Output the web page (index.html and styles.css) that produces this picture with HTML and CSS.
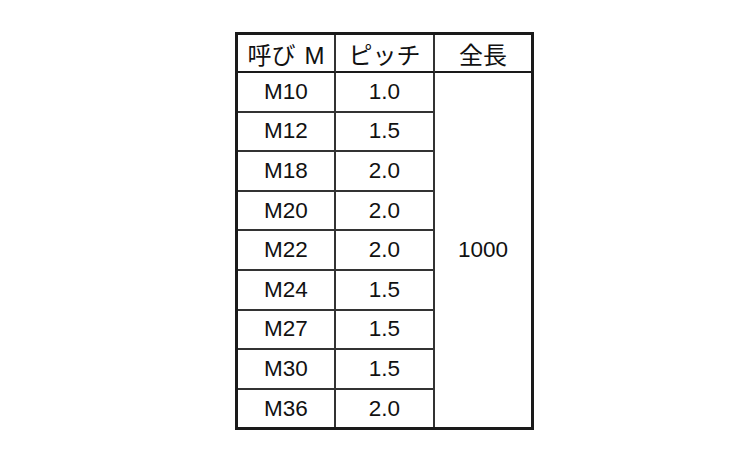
FILE: index.html
```html
<!DOCTYPE html>
<html lang="ja">
<head>
<meta charset="utf-8">
<title>呼び M ピッチ 全長</title>
<link rel="stylesheet" href="styles.css">
</head>
<body>
<main class="page">
  <table class="spec">
    <thead>
      <tr>
        <th class="c1">呼び<span class="gap"></span>M</th>
        <th class="c2">ピッチ</th>
        <th class="c3">全長</th>
      </tr>
    </thead>
    <tbody>
      <tr><td>M10</td><td>1.0</td><td class="len" rowspan="9">1000</td></tr>
      <tr><td>M12</td><td>1.5</td></tr>
      <tr><td>M18</td><td>2.0</td></tr>
      <tr><td>M20</td><td>2.0</td></tr>
      <tr><td>M22</td><td>2.0</td></tr>
      <tr><td>M24</td><td>1.5</td></tr>
      <tr><td>M27</td><td>1.5</td></tr>
      <tr><td>M30</td><td>1.5</td></tr>
      <tr class="last"><td>M36</td><td>2.0</td></tr>
    </tbody>
  </table>
</main>
</body>
</html>
```

FILE: styles.css
```css
html, body {
  margin: 0;
  padding: 0;
  background: #ffffff;
}

.page {
  width: 750px;
  height: 450px;
  padding: 32px 0 0 235px;
  box-sizing: border-box;
}

.spec {
  border: 3px solid #1a1a1a;
  border-collapse: separate;
  border-spacing: 0;
  font-family: "Liberation Sans", "Noto Sans CJK JP", sans-serif;
  color: #111;
  background: #fff;
}

.spec th,
.spec td {
  padding: 0;
  text-align: center;
  vertical-align: middle;
  border-right: 2px solid #333;
  border-bottom: 2px solid #333;
  font-weight: normal;
}

.spec th {
  height: 36px;
  font-size: 24px;
  border-bottom-color: #1a1a1a;
  white-space: nowrap;
}

.spec .gap {
  display: inline-block;
  width: 9px;
}

.spec td {
  height: 37.6px;
  font-size: 22.5px;
}

.spec .c1 { width: 96px; }
.spec .c2 { width: 97px; }
.spec .c3 { width: 96px; }

.spec .c3,
.spec .len {
  border-right: none;
}

.spec .len {
  border-bottom: none;
}

.spec tr.last td {
  border-bottom: none;
}
```
